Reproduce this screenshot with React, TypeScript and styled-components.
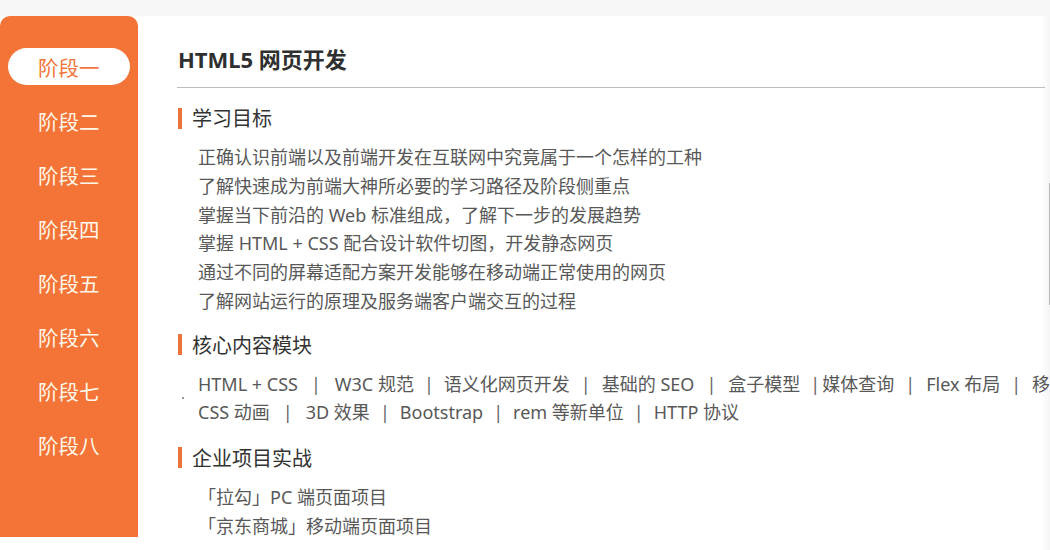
import React from "react";
import styled, { createGlobalStyle } from "styled-components";

const GlobalStyle = createGlobalStyle`
  html, body {
    margin: 0;
    padding: 0;
    background: #f7f7f7;
    overflow: hidden;
  }
  body {
    font-family: "Noto Sans", "Noto Sans CJK SC", sans-serif;
  }
`;

const ORANGE = "#f47337";

const Page = styled.div`
  width: 1050px;
  height: 550px;
  padding-top: 16px;
  box-sizing: border-box;
  position: relative;
  overflow: hidden;
`;

const Layout = styled.div`
  display: flex;
  height: 534px;
  background: #fff;
`;

const Sidebar = styled.nav`
  width: 138px;
  height: 521px;
  flex: none;
  background: ${ORANGE};
  border-radius: 10px 10px 0 0;
  padding-top: 32px;
  box-sizing: border-box;
  display: flex;
  flex-direction: column;
  gap: 17px;
`;

const StageItem = styled.div<{ $active?: boolean }>`
  margin: 0 8px;
  height: 37px;
  border-radius: 19px;
  padding-left: 30px;
  display: flex;
  align-items: center;
  font-size: 20.5px;
  font-family: "Noto Sans CJK SC", sans-serif;
  color: ${(p) => (p.$active ? "#f2763a" : "#fff7ea")};
  background: ${(p) => (p.$active ? "#fff" : "transparent")};
`;

const Main = styled.main`
  flex: 1;
  min-width: 0;
  padding: 28px 0 0 39px;
  overflow: hidden;
`;

const TitleBar = styled.div`
  width: 868px;
  border-bottom: 1px solid #bdbdbd;
  padding-bottom: 13px;
`;

const Title = styled.h1`
  margin: 0;
  font-size: 22px;
  line-height: 30px;
  font-weight: 700;
  color: #2f2f2f;
  padding-left: 1px;
`;

const Section = styled.section<{ $top: number }>`
  margin-top: ${(p) => p.$top}px;
`;

const SectionHead = styled.h2`
  margin: 0;
  display: flex;
  align-items: center;
  gap: 10px;
  font-size: 20px;
  line-height: 28px;
  font-weight: 400;
  color: #333;
  font-family: "Noto Sans CJK SC", sans-serif;
  &::before {
    content: "";
    width: 4px;
    height: 21px;
    background: #ea7439;
    margin-left: 1px;
  }
`;

const List = styled.ul`
  list-style: none;
  margin: 11px 0 0;
  padding: 0 0 0 21px;
`;

const Item = styled.li`
  font-size: 18px;
  line-height: 28.8px;
  color: #585858;
  white-space: nowrap;
`;

const CoreRow = styled.div`
  display: flex;
  align-items: center;
  margin-top: 11px;
  padding-bottom: 3px;
`;

const Dot = styled.span`
  width: 2px;
  height: 2px;
  border-radius: 1px;
  background: #777;
  margin: 0 14px 0 5px;
  flex: none;
`;

const CoreLines = styled.div`
  display: flex;
  flex-direction: column;
`;

const CoreLine = styled.div`
  font-size: 18px;
  line-height: 28px;
  color: #585858;
  white-space: nowrap;
`;

const Sep = styled.span<{ $l?: number; $r?: number }>`
  margin: 0 ${(p) => p.$r ?? 12}px 0 ${(p) => p.$l ?? 12}px;
  color: #666;
`;

const EdgeShade = styled.div`
  position: absolute;
  top: 16px;
  right: 0;
  width: 9px;
  bottom: 0;
  background: linear-gradient(to right, rgba(0,0,0,0), rgba(0,0,0,0.045));
  pointer-events: none;
`;

const Thumb = styled.div`
  position: absolute;
  right: 0;
  top: 183px;
  width: 1px;
  height: 122px;
  background: #b8b8b8;
`;

const stages = ["阶段一", "阶段二", "阶段三", "阶段四", "阶段五", "阶段六", "阶段七", "阶段八"];

const goals = [
  "正确认识前端以及前端开发在互联网中究竟属于一个怎样的工种",
  "了解快速成为前端大神所必要的学习路径及阶段侧重点",
  "掌握当下前沿的 Web 标准组成，了解下一步的发展趋势",
  "掌握 HTML + CSS 配合设计软件切图，开发静态网页",
  "通过不同的屏幕适配方案开发能够在移动端正常使用的网页",
  "了解网站运行的原理及服务端客户端交互的过程",
];

const line1: { t: string; l?: number; r?: number }[] = [
  { t: "HTML + CSS" },
  { t: "W3C 规范", l: 13, r: 14 },
  { t: "语义化网页开发", l: 10, r: 10 },
  { t: "基础的 SEO", l: 11, r: 11 },
  { t: "盒子模型", l: 12, r: 12 },
  { t: "媒体查询", l: 10, r: 2 },
  { t: "Flex 布局", l: 11, r: 11 },
  { t: "移动端适配", l: 11, r: 11 },
];

const line2: { t: string; l?: number; r?: number }[] = [
  { t: "CSS 动画" },
  { t: "3D 效果", l: 13, r: 13 },
  { t: "Bootstrap", l: 10, r: 10 },
  { t: "rem 等新单位", l: 10, r: 10 },
  { t: "HTTP 协议", l: 10, r: 10 },
];

function Pipeline({ items }: { items: { t: string; l?: number; r?: number }[] }) {
  return (
    <CoreLine>
      {items.map((it, i) => (
        <React.Fragment key={it.t}>
          {i > 0 && (
            <Sep $l={it.l} $r={it.r}>
              |
            </Sep>
          )}
          {it.t}
        </React.Fragment>
      ))}
    </CoreLine>
  );
}

export default function App() {
  return (
    <>
      <GlobalStyle />
      <Page>
        <Layout>
          <Sidebar>
            {stages.map((s, i) => (
              <StageItem key={s} $active={i === 0}>
                {s}
              </StageItem>
            ))}
          </Sidebar>
          <Main>
            <TitleBar>
              <Title>HTML5 网页开发</Title>
            </TitleBar>

            <Section $top={16}>
              <SectionHead>学习目标</SectionHead>
              <List>
                {goals.map((g) => (
                  <Item key={g}>{g}</Item>
                ))}
              </List>
            </Section>

            <Section $top={15}>
              <SectionHead>核心内容模块</SectionHead>
              <CoreRow>
                <Dot />
                <CoreLines>
                  <Pipeline items={line1} />
                  <Pipeline items={line2} />
                </CoreLines>
              </CoreRow>
            </Section>

            <Section $top={15}>
              <SectionHead>企业项目实战</SectionHead>
              <List>
                <Item>「拉勾」PC 端页面项目</Item>
                <Item>「京东商城」移动端页面项目</Item>
              </List>
            </Section>
          </Main>
        </Layout>
        <EdgeShade />
        <Thumb />
      </Page>
    </>
  );
}
